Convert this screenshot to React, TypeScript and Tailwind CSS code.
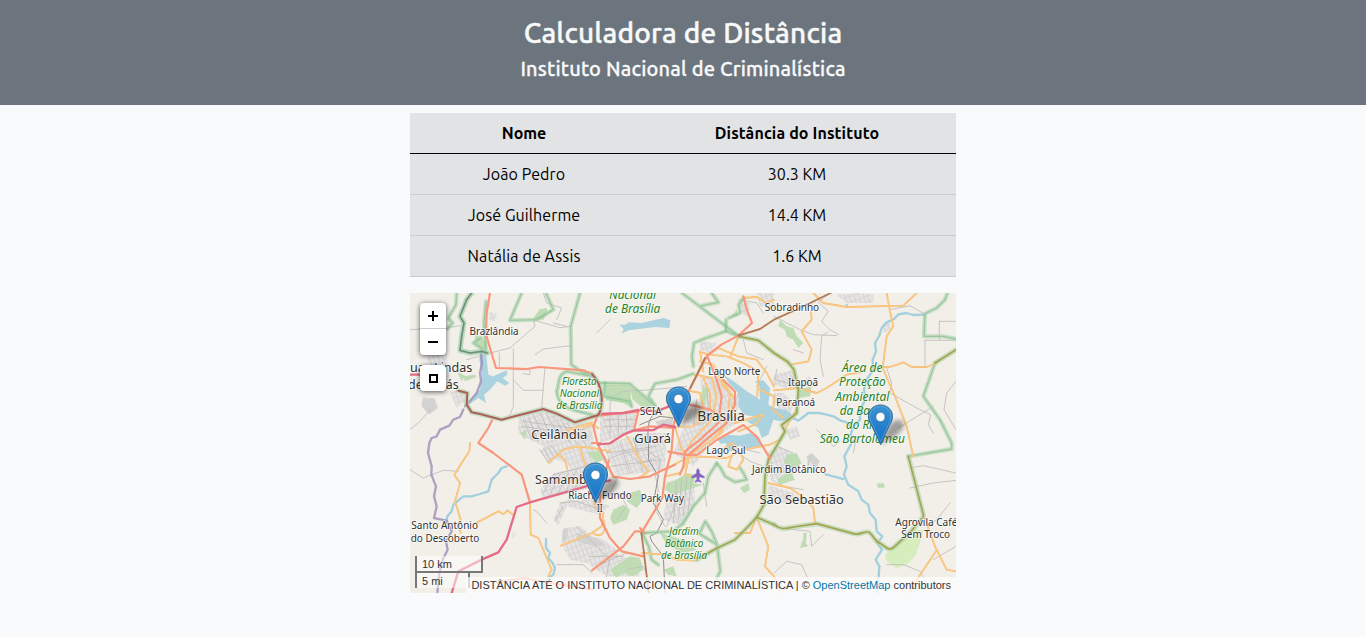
import React from "react";

const people = [
  { name: "João Pedro", distance: "30.3 KM" },
  { name: "José Guilherme", distance: "14.4 KM" },
  { name: "Natália de Assis", distance: "1.6 KM" },
];

type Label = [text: string, x: number, y: number, width: number, size: number, green?: boolean];

const labels: Label[] = [
  ["Brazlândia", 252, 126, 147, 30],
  ["Águas Lindas", 70, 236, 234, 39],
  ["de Goiás", 70, 287, 152, 39],
  ["Ceilândia", 448, 438, 168, 39],
  ["Floresta", 508, 276, 104, 30, true],
  ["Nacional", 508, 312, 118, 30, true],
  ["de Brasília", 508, 348, 138, 30, true],
  ["Nacional", 668, 18, 140, 36, true],
  ["de Brasília", 668, 60, 166, 36, true],
  ["SCIA", 722, 367, 66, 30],
  ["Guará", 728, 451, 110, 39],
  ["Brasília", 933, 384, 142, 41],
  ["Lago Norte", 973, 246, 156, 31],
  ["Sobradinho", 1146, 54, 163, 31],
  ["Itapoã", 1179, 278, 90, 31],
  ["Paranoá", 1157, 340, 116, 31],
  ["Área de", 1357, 236, 122, 36, true],
  ["Proteção", 1357, 280, 140, 36, true],
  ["Ambiental", 1357, 323, 162, 36, true],
  ["da Bacia", 1357, 366, 136, 36, true],
  ["do Rio", 1357, 409, 98, 36, true],
  ["São Bartolomeu", 1357, 450, 256, 36, true],
  ["Samambaia", 478, 573, 206, 39],
  ["Riacho Fundo", 570, 619, 190, 31],
  ["II", 569, 656, 18, 31],
  ["Park Way", 757, 628, 130, 31],
  ["Lago Sul", 948, 483, 118, 31],
  ["Jardim Botânico", 1137, 540, 222, 31],
  ["São Sebastião", 1175, 632, 253, 39],
  ["Jardim", 822, 725, 88, 30, true],
  ["Botânico", 822, 761, 116, 30, true],
  ["de Brasília", 822, 797, 138, 30, true],
  ["Agrovila Café", 1549, 699, 186, 31],
  ["Sem Troco", 1547, 736, 146, 31],
  ["Santo Antônio", 104, 708, 200, 31],
  ["do Descoberto", 105, 747, 206, 31],
];

const minorRoads = [
  "M300 165L375 100L370 80L400 90L450 104L484 100 M300 165L240 180L170 200 M310 168V340L298 370 M310 230H360V245L340 242 M405 222L395 345 M310 260L340 292H398 M376 185L400 168L482 158 M0 110L110 105L150 98 M400 0L410 30L455 45L440 80 M268 180V222 M0 530L40 555L100 532L145 535 M0 410L30 385L60 350 M430 90L470 100",
  "M1260 0L1225 28L1255 55L1235 85L1260 110L1285 125 M1255 115L1235 130L1230 200L1240 250 M1092 70L1170 110L1210 125L1280 128 M1440 50L1500 38L1542 62 M1545 142H1638 M1588 85V142 M1588 85H1638 M1545 142V220 M1638 265L1610 300L1602 350L1638 410 M1430 225L1445 270L1440 300L1520 345L1562 365L1555 395L1570 420 M1465 405L1570 340 M1500 525L1540 518L1638 540 M1500 585L1570 570L1638 562 M1620 630L1580 680L1560 695",
  "M1110 705L1200 715L1205 760L1240 725 M1092 840L1130 805L1175 815L1195 860 M1220 410L1270 460L1290 445 M1638 760L1570 800 M1430 815L1480 815L1530 835L1550 870 M370 650L385 660L410 690 M440 815L520 815L546 840 M1150 170L1180 180 M1340 430L1330 480 M1100 230L1095 260L1150 275",
  "M600 360V340C600 300 640 290 700 292L780 285L830 280 M580 500L620 560L600 600 M640 470L690 510L730 500 M630 600L650 640L620 680 M800 600L790 650L770 700 M735 540L745 590L735 650L765 700 M560 120L600 80 M890 640L880 570 M650 830L700 820L720 870 M590 500L640 480L710 470L750 500L745 550",
  "M990 20L1040 30L1060 60 M1000 140L1010 180L1060 200 M1070 220L1040 280 M1060 520L1020 505L985 480 M980 450L1010 470L1050 480 M1085 560L1120 580L1180 590 M1100 460L1150 480 M1200 490L1190 540",
];

const greenEdges = [
  "M140 0L138 35L115 75L128 90L112 108",
  "M228 25L222 90L228 175L190 150L212 135",
  "M335 0L300 82L380 80L430 50L408 0",
  "M510 0L482 100L484 215L520 240L546 243",
  "M546 250L470 235C440 245 448 280 440 295C446 345 480 350 546 365",
  "M568 270L660 272L670 282L736 338L715 310L735 272L800 260L850 242",
  "M850 220L846 190L852 150L875 140L910 128L948 114L986 130",
  "M816 0L985 128", "M876 38L925 28L905 0 M956 75L990 60L986 35L1000 15 M948 114V80",
  "M585 270L582 310L660 325L665 340",
  "M1612 0L1605 20L1580 45L1545 62L1542 130L1600 130L1638 138",
  "M1575 210L1540 310L1590 380L1625 450V468L1495 490",
  "M920 511L895 551L885 600L850 640L820 690L790 715L696 720",
  "M920 511L932 525L945 550L975 567L1010 560L1000 540L990 525",
  "M886 685L868 722L921 755L905 715Z M921 755L931 835L915 865",
  "M696 720L716 760L725 800L745 815",
];

const oliveEdges = [
  "M986 130L1045 142L1092 180L1132 205L1152 230L1165 291L1160 361L1115 396L1125 416L1075 501L1065 551L1063 600L1065 630L1040 673",
  "M860 800L920 766L975 740L1010 705L1040 673L1092 695",
  "M1092 695C1110 710 1125 708 1150 702L1220 692L1330 722C1350 728 1365 712 1378 718C1395 732 1395 748 1412 752C1425 758 1430 775 1450 764L1500 718L1540 672V665L1495 490",
  "M1638 170L1575 210",
];

const secondary = [
  "M145 690L152 720 M180 450L178 475L155 510L133 545L150 570L135 625L152 680 M195 692L265 655L280 664L292 652L308 665",
  "M360 628L362 725L385 735L425 830L415 850",
  "M453 758L546 720L575 700L580 660",
  "M415 508L460 470L505 460L546 465L600 475 M445 485L465 500L472 528 M510 460L520 500L540 540",
  "M520 405L546 395L565 405 M470 412L546 388",
  "M650 430L690 500L716 535L690 553 M560 650L546 600",
  "M1210 0L1240 30L1310 42L1480 38L1520 0 M1430 0L1440 55L1450 100L1430 130L1418 225L1455 310L1490 400L1510 490",
  "M1140 215L1195 205L1205 170L1175 115L1205 80L1203 55 M1092 180L1140 215",
  "M1350 238L1310 245L1250 285L1220 300L1165 285L1092 292 M1422 222L1440 222L1480 208L1505 222L1550 222L1580 210",
  "M1540 665L1575 760L1610 830L1638 835 M1578 775L1520 860L1500 900",
  "M1040 673L1075 760L1065 820L1092 850L1110 900 M1040 673L1020 720L975 720 M696 780L760 785L800 800L850 803L910 770",
  "M1075 570L1140 585L1190 620L1210 645L1215 690",
  "M870 175L880 235 M869 177L900 185L950 190L1000 210L1045 235L1042 310 M891 188L925 165L985 190L1040 200L1070 240L1092 280",
  "M870 205L910 215L940 280L960 300L955 360L935 420L835 490L830 525",
  "M855 245L905 255L920 310L905 380L845 445L825 485 M878 250L900 300L900 350 M920 230L945 275L975 320L950 390L910 440",
  "M765 531L810 505L850 490L950 495L1000 470L1080 455L1110 440L1135 390L1160 350",
  "M795 401L815 470L835 490 M795 401L850 400L885 375L940 385 M975 390L1040 370L1060 365L1035 395L985 415",
  "M925 480L965 450L990 475L1000 500L980 530L955 520L965 490",
  "M820 290L870 300L880 340L870 375 M765 551L810 540L835 500L825 545L845 550",
  "M546 720C580 740 590 710 580 680 M1120 375L1090 350L1092 310L1050 290 M985 130L960 195",
  "M1000 15L1040 12L1070 30L1092 20",
];

const trunk = [
  "M240 0L230 60L228 125L240 165L258 225L350 228L388 222L520 232L546 243",
  "M246 382L235 405L205 450L250 480L335 545L360 628",
  "M565 363L550 400L562 451L610 551L660 558L720 550L765 528L795 515",
  "M1000 10L1010 50L1026 90L985 128L934 155L891 188L841 285L800 360L790 400L785 471L765 551L757 615L700 710",
  "M891 188L920 260L935 310L925 390L870 440L825 475L820 520L810 545",
  "M940 261L975 296L975 335L950 390L900 430L835 486",
  "M775 476L820 484L860 486L920 441L1000 396L1040 431L1080 496",
  "M546 450L571 450 M546 370L620 362L685 356 M685 355L672 412L720 400L795 405",
  "M596 503L570 600L570 675L600 735L635 775L700 790",
  "M696 715L675 715L640 760L546 832 M705 720L690 705",
  "M840 335L900 350L950 380",
  "M260 868L340 855L420 870L546 890",
];

const motorway = [
  "M0 245H60L100 270",
  "M600 562L546 575L360 628L320 642L290 740L265 778L215 800L145 835L125 900",
  "M565 363L640 360L685 351L740 355L790 335",
  "M565 454L600 451L640 425L670 413L730 411L760 395L795 402",
];

const brown = [
  "M145 293L172 300L170 335L185 358L210 363L275 380L320 368L400 348L440 362L495 388L546 372L565 366C580 340 582 280 546 243",
  "M985 128L1050 108L1092 80L1180 40L1262 0",
  "M841 285L885 195",
  "M694 720L702 780L716 900",
];

const rivers = [
  "M1542 65L1510 66L1490 60L1465 64L1452 78L1430 88L1415 105L1408 128L1395 150L1398 175L1388 200L1390 230L1370 260L1362 290L1366 320L1350 350L1350 380L1330 400L1322 425L1325 450L1303 490L1310 520L1302 545L1315 575L1345 595L1355 620L1375 635L1380 660L1397 680L1400 715L1417 730L1402 750L1416 770L1397 800L1408 820L1403 900",
  "M1120 380L1150 375L1165 383L1195 360L1225 360L1250 365L1270 370L1290 382L1310 388L1325 405",
  "M1247 544L1270 550L1300 558",
  "M290 520L275 525L265 540L245 560L235 595L210 603L185 610L160 610L130 635L125 655L112 670L108 688",
  "M408 738L408 765L420 780L415 795L428 810L435 825L430 845L410 860L400 885",
];

const woods = [
  "M390 48L410 45L412 55L400 80L368 78Z",
  "M585 275L660 275L665 345L640 330L588 322Z",
  "M660 280L735 340L700 345L668 320Z",
  "M770 570L800 560L830 540L860 545L850 570L880 575L850 585L790 605L765 590Z",
  "M600 830L660 790L690 795L700 830L670 850L640 840L620 855Z",
  "M610 650L640 635L660 650L650 680L610 695L600 675Z M660 600L690 590L700 620L680 645L650 625Z",
  "M1180 720L1190 720L1188 750L1180 748Z M1178 740L1195 760L1170 765Z",
  "M1400 572L1420 570L1425 583L1405 585Z",
  "M1110 80L1130 100L1150 105L1160 130L1180 150L1165 165L1150 140L1130 130L1125 110L1105 100Z",
  "M195 120L232 150L225 175L195 150Z M160 250L195 245L200 252L165 265Z M140 235L165 248L155 265Z",
  "M1165 290L1205 280L1200 310L1165 315Z M1100 560L1140 535L1155 560L1110 575Z",
  "M1130 485L1160 480L1175 510L1150 530L1120 510Z M990 585L1015 570L1020 590L1002 600Z",
  "M870 320L880 280L895 290L880 350Z M960 75L985 68L980 50Z",
  "M750 720L820 740L860 770L820 780L770 755Z M760 830L790 820L800 850L775 845Z",
  "M530 480L570 470L590 495L560 510Z M330 420L350 410L345 440Z",
];

const towns = [
  "M325 372L400 348L440 365L495 392L546 385L550 450L560 530L545 560L500 550L470 510L410 490L400 460L350 435L325 420Z",
  "M570 365L680 358L670 410L620 435L570 450Z",
  "M580 460L660 430L740 460L760 530L620 550Z",
  "M390 475L420 450L455 475L420 515Z",
  "M390 590L430 540L546 515L590 530L560 580L400 620Z",
  "M430 680L450 630L500 610L560 620L600 640L570 665L470 640L445 695Z",
  "M455 755L460 705L510 700L546 730L580 740L630 790L680 800L690 850L590 850L530 810L480 800Z",
  "M560 790L580 740L620 770L610 800Z",
  "M870 245L940 260L985 330L980 390L910 440L850 520L790 480L830 380L880 350Z",
  "M820 350L900 340L910 390L850 410L820 395Z",
  "M1090 245L1150 230L1155 280L1200 250V275L1150 290L1090 275Z",
  "M795 560L850 550L855 640L820 700L760 680L770 610Z",
  "M680 420L770 420L765 520L710 510L690 460Z",
  "M1070 480L1110 460L1160 490L1150 550L1080 560Z M1190 490L1205 480L1230 505L1220 525L1192 515Z",
  "M1075 575L1150 600L1190 630L1110 630L1075 600Z",
  "M235 58L260 60L255 85L238 80Z M55 175L110 180L120 280L90 290L45 270Z M120 295L165 290L170 320L140 345Z M38 310L75 318L85 345L55 365L35 340Z",
  "M1280 5L1345 0L1390 5V30H1310Z M1420 90L1440 80L1440 110L1420 120Z",
  "M1040 0L1092 0V45L1050 40Z M870 145L920 150L900 180L870 170Z M985 20L1020 30L1015 70L990 60Z",
  "M1080 380L1110 350L1090 330L1092 300L1120 300L1150 330L1140 370Z M1125 410L1160 400L1170 430L1140 440Z",
  "M310 715L318 728L306 735Z",
];

function Lines({ paths, className }: { paths: string[]; className: string }) {
  return (
    <g className={className}>
      {paths.map((d, i) => (
        <path key={i} d={d} />
      ))}
    </g>
  );
}

function MapDrawing() {
  return (
    <svg viewBox="0 0 1638 900" className="block h-[300px] w-[546px]" strokeLinejoin="round" strokeLinecap="round" fill="none">
      <defs>
        <pattern id="streets" width="13" height="17" patternUnits="userSpaceOnUse" patternTransform="rotate(-20)">
          <rect width="13" height="17" fill="#e2e0de" />
          <path d="M0 0V17M0 0H13" stroke="#cfcdcc" strokeWidth="2.5" />
          <path d="M6 5V14" stroke="#eeedeb" strokeWidth="3" />
        </pattern>
        <linearGradient id="pin" x1="0" y1="0" x2="0" y2="1">
          <stop offset="0" stopColor="#3c93d2" />
          <stop offset="1" stopColor="#126fc6" />
        </linearGradient>
        <filter id="soft" x="-30%" y="-30%" width="160%" height="160%">
          <feGaussianBlur stdDeviation="7" />
        </filter>
      </defs>
      <rect width="1638" height="900" fill="#f2efe9" />
      <path d="M1425 785L1440 770L1490 722L1520 708L1540 712L1530 750L1515 790L1490 815L1460 825L1430 805Z" fill="#d6edbd" />
      <path d="M800 650L835 635L850 640L810 700Z M770 360L790 350L780 390Z" fill="#edeec8" />
      <g fill="url(#streets)">{towns.map((d, i) => <path key={i} d={d} />)}</g>
      <g fill="#d2d2d0">
        <path d="M820 355L890 345L912 375L870 400L825 385Z M735 385L790 375L785 402L745 400Z M458 710L475 705L470 740L455 750Z M500 720L560 735L590 760L555 760L500 745Z M640 280L662 285L660 330L600 320L610 310L640 315Z M1190 490L1205 480L1230 505L1215 525Z M38 318L72 315L82 345L60 362L35 340Z" />
      </g>
      <g fill="#bfdcb4">{woods.map((d, i) => <path key={i} d={d} />)}</g>
      <g fill="#aad3df">
        <path d="M212 172L228 180L232 215L235 245L250 250L290 232L292 245L278 255L298 270L285 278L262 265L240 290L222 305L228 330L205 315L170 340L190 310L210 290L215 240L208 200Z" />
        <path d="M628 95L646 95L656 88L696 90L736 80L761 75L781 82L778 105L736 102L686 108L656 112L634 122L641 108Z" />
        <path d="M940 245L975 268L1010 295L1035 310L1050 320L1048 280L1035 265L1060 262L1080 285L1075 335L1095 345L1130 352L1150 370L1110 385L1090 380L1075 425L1055 435L1045 405L1010 385L1040 372L1000 365L985 340L985 300L960 275Z" />
        <path d="M925 440L955 425L990 428L1020 420L1050 435L1055 460L1010 470L990 455L965 475L945 470L950 450L930 452Z" />
        <circle cx="1310" cy="36" r="4" />
      </g>
      <Lines paths={minorRoads} className="stroke-[#c1bfbe] stroke-[2.7]" />
      <Lines
        paths={[
          "M340 380L365 440 M355 375L385 445 M372 368L400 430 M390 360L425 435 M410 362L450 440 M430 370L480 450 M450 380L505 455 M470 390L530 455 M335 400L540 430 M340 385L520 410 M390 470L415 510 M400 465L425 505 M410 460L435 495 M420 455L445 485",
          "M400 600L430 545L530 520 M420 605L450 545 M445 600L475 540 M470 590L500 530 M495 585L525 525 M580 380H680 M580 400H670 M600 365V430 M625 365V420 M650 360V410 M590 480L740 460 M600 520L755 500 M630 450L660 540 M670 435L700 540",
          "M800 570L790 690 M815 560L805 680 M830 555L820 670 M845 555L835 650 M860 320L850 400 M890 270L895 350 M985 300L960 380",
          "M450 630L500 625L570 650 M435 685L460 640 M500 700L600 800 M540 790L640 790 M560 820L650 780 M590 850L600 790",
        ]}
        className="stroke-[#bebcbb] stroke-[2.5]"
      />
      <Lines paths={["M735 360C700 390 720 440 715 500L745 550L730 630L760 680L740 720L720 730L725 745L760 790L765 900 M690 395L750 370L790 375"]} className="stroke-[#8d8d8d] stroke-[3]" />
      <Lines paths={rivers} className="stroke-[#a3d0de] stroke-[7]" />
      <Lines paths={["M160 350L150 372L130 380L118 398L90 410L80 430L65 435L58 450L54 480L65 520L64 545L78 580L72 610L80 640L72 675L110 683L125 715L108 745L113 770L98 800L88 840L82 900", "M212 180L216 210L210 240L213 265L200 300L185 318L165 340"]} className="stroke-[#9c8db8]/80 stroke-[7]" />
      <Lines paths={greenEdges} className="stroke-[#a8d2a8]/55 stroke-[13]" />
      <Lines paths={greenEdges} className="stroke-[#7fb88a]/60 stroke-[4]" />
      <Lines paths={["M185 0L170 20L160 45L150 70L162 90L155 130L150 172L180 180L215 175L232 180"]} className="stroke-[#a8d2a8]/70 stroke-[16]" />
      <Lines paths={["M185 0L170 20L160 45L150 70L162 90L155 130L150 172L180 180L215 175L232 180"]} className="stroke-[#6a8f7c] stroke-[5]" />
      <Lines paths={secondary} className="stroke-[#f3b96e] stroke-[5.5]" />
      <Lines paths={secondary} className="stroke-[#fccb88] stroke-[3.5]" />
      <Lines paths={oliveEdges} className="stroke-[#a8d2a8]/60 stroke-[15]" />
      <Lines paths={oliveEdges} className="stroke-[#a5a34c] stroke-[5]" />
      <Lines paths={trunk} className="stroke-[#f9967b] stroke-[6.5]" />
      <Lines paths={motorway} className="stroke-[#e46d85] stroke-[7]" />
      <Lines paths={brown.slice(0, 1)} className="stroke-[#a8d2a8]/60 stroke-[15]" />
      <Lines paths={brown.slice(0, 1)} className="stroke-[#ad5f5c] stroke-[6]" />
      <Lines paths={brown.slice(1)} className="stroke-[#b37d58] stroke-[5.5]" />
      <path d="M864 527L868 532V541L883 551V555L868 551L867 560L873 565V568L864 565L855 568V565L861 560L860 551L845 555V551L860 541V532Z" fill="#8461c4" stroke="#8461c4" strokeWidth="1.5" />
      <g textAnchor="middle" strokeWidth="5" className="font-['Noto_Sans','Open_Sans',sans-serif]">
        {labels.map(([text, x, y, width, size, green], i) => (
          <text
            key={i}
            x={x}
            y={y}
            textLength={width}
            lengthAdjust="spacingAndGlyphs"
            fontSize={size}
            paintOrder="stroke"
            stroke={green ? "rgba(255,255,255,.6)" : "rgba(255,255,255,.75)"}
            fill={green ? "#228222" : "#303030"}
            fontStyle={green ? "italic" : "normal"}
          >
            {text}
          </text>
        ))}
      </g>
      {[[768, 280], [519, 508], [1374, 334]].map(([x, y]) => (
        <g key={x} transform={`translate(${x} ${y})`}>
          <path d="M39 121L58 75C68 52 88 42 102 50C116 62 100 84 78 97Z" fill="#000" opacity=".34" filter="url(#soft)" />
          <path d="M37.5 120L10 62C-12 28 12 2 37.5 2S87 28 65 62Z" fill="url(#pin)" stroke="#2e6c97" strokeWidth="3" />
          <path d="M37.5 110L14 62C-6 30 14 6 37.5 6S81 30 61 62Z" stroke="#fff" strokeOpacity=".2" strokeWidth="3" />
          <circle cx="37.5" cy="38" r="14" fill="#fff" stroke="#2e6c97" strokeWidth="2" />
        </g>
      ))}
    </svg>
  );
}

export default function App() {
  return (
    <div className="min-h-screen bg-[#f8fafc] font-['Ubuntu','Noto_Sans',sans-serif] text-black">
      <header className="flex h-[105px] flex-col items-center bg-[#6c757d] pt-4 text-[#f8f9fa]">
        <h1 className="mb-[7px] text-[28px] leading-[34px] font-medium tracking-[0.2px] whitespace-nowrap [-webkit-text-stroke:0.45px_#f8f9fa]">Calculadora de Distância</h1>
        <h2 className="text-[20px] leading-[24px] font-medium tracking-[0.19px] whitespace-nowrap [-webkit-text-stroke:0.3px_#f8f9fa]">Instituto Nacional de Criminalística</h2>
      </header>
      <main className="mx-auto w-[546px] pt-2">
        <table className="mb-4 w-full table-fixed border-separate border-spacing-0 bg-[#e2e3e5] text-center text-base leading-6">
          <colgroup>
            <col className="w-[228px]" />
            <col className="w-[318px]" />
          </colgroup>
          <thead>
            <tr>
              <th className="h-[41px] border-b border-black p-0 font-bold">Nome</th>
              <th className="h-[41px] border-b border-black p-0 font-bold tracking-[0.12px]">Distância do Instituto</th>
            </tr>
          </thead>
          <tbody>
            {people.map((p) => (
              <tr key={p.name}>
                <td className="h-[41px] border-b border-[#cbccce] p-0 tracking-[0.1px]">{p.name}</td>
                <td className="h-[41px] border-b border-[#cbccce] p-0">{p.distance}</td>
              </tr>
            ))}
          </tbody>
        </table>
        <section className="relative h-[300px] overflow-hidden font-['Liberation_Sans',Arial,sans-serif]">
          <MapDrawing />
          <div className="absolute top-[10px] left-[10px] flex flex-col gap-[10px]">
            <div className="flex w-[26px] flex-col rounded bg-white shadow-[0_1px_5px_rgba(0,0,0,0.65)]">
              <button aria-label="Zoom in" className="flex h-[26px] items-center justify-center border-b border-[#ccc]">
                <svg viewBox="0 0 10 10" className="size-[10px]"><path d="M0 5H10M5 0V10" stroke="#000" strokeWidth="2" /></svg>
              </button>
              <button aria-label="Zoom out" className="flex h-[26px] items-center justify-center">
                <svg viewBox="0 0 10 10" className="size-[10px]"><path d="M0 5H10" stroke="#000" strokeWidth="2" /></svg>
              </button>
            </div>
            <button aria-label="Full screen" className="flex size-[26px] items-center justify-center rounded bg-white pl-px shadow-[0_1px_5px_rgba(0,0,0,0.65)]">
              <span className="size-[9px] border-2 border-black" />
            </button>
          </div>
          <div className="absolute bottom-[5px] left-[5px] flex flex-col items-start text-[11px] leading-[12px] text-[#333]">
            <div className="h-[17px] w-[68px] border-2 border-t-0 border-[#777] bg-white/50 px-[5px] pt-[2px]">10 km</div>
            <div className="h-[15px] w-[55px] border-x-2 border-[#777] bg-white/50 px-[5px] pt-[2px]">5 mi</div>
          </div>
          <div className="absolute right-0 bottom-0 h-4 bg-white/70 px-[5px] text-[11px] leading-[16px] whitespace-nowrap text-[#333]">
            DISTÂNCIA ATÉ O INSTITUTO NACIONAL DE CRIMINALÍSTICA | © <a className="text-[#0078a8]">OpenStreetMap</a> contributors
          </div>
        </section>
      </main>
    </div>
  );
}
